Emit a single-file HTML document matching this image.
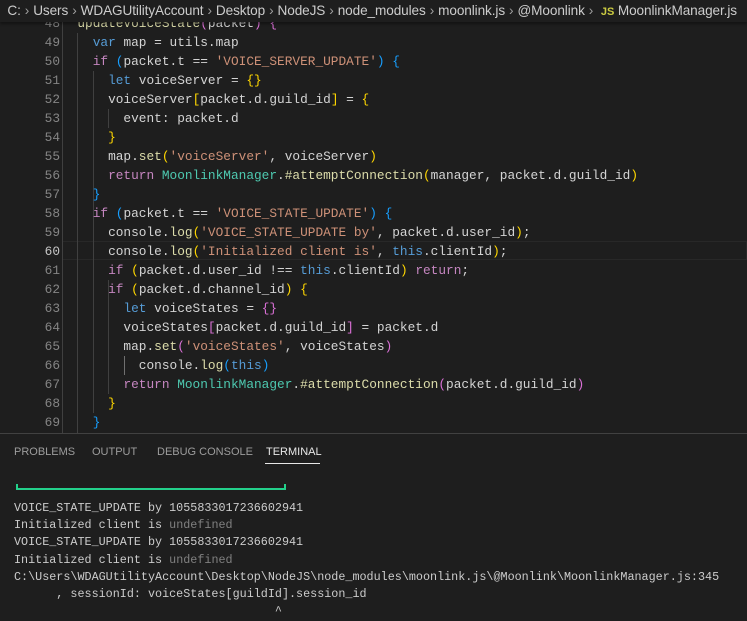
<!DOCTYPE html>
<html><head><meta charset="utf-8"><style>
body{margin:0;width:747px;height:620px;background:#1e1e1e;overflow:hidden;position:relative;font-family:"Liberation Mono",monospace}
.bc{position:absolute;left:0;top:0;width:747px;height:22px;background:#1e1e1e;font-family:"Liberation Sans",sans-serif;font-size:13.6px;letter-spacing:-0.1px;color:#cccccc;line-height:22px;white-space:nowrap;z-index:2;box-shadow:0 2px 3px #0006}
.bc .s{color:#a0a0a0;margin:0 4px}
.ln{position:absolute;left:0;width:62px;text-align:right;padding-right:0;color:#858585;font-size:12.8px}
.code{position:absolute;left:62px;font-size:12.8px;color:#d4d4d4;white-space:pre;line-height:19px}
.row{position:absolute;left:0;width:747px;height:19px;line-height:19px}
.k{color:#569cd6}.c{color:#c586c0}.s1{color:#ce9178}.f{color:#dcdcaa}.t{color:#4ec9b0}
.g{color:#ffd700}.p{color:#da70d6}.b{color:#179fff}
.guide{position:absolute;width:1px;background:#404040}
.panel{position:absolute;left:0;top:433px;width:747px;height:187px;border-top:1px solid #414141;background:#1e1e1e}
.tabs{position:absolute;top:12px;font-family:"Liberation Sans",sans-serif;font-size:11px;color:#9d9d9d}
.term{position:absolute;left:14px;font-size:11.75px;color:#cccccc;white-space:pre;line-height:17.2px}
</style></head><body>
<div class="bc">&nbsp;&nbsp;C:<span class="s">›</span>Users<span class="s">›</span>WDAGUtilityAccount<span class="s">›</span>Desktop<span class="s">›</span>NodeJS<span class="s">›</span>node_modules<span class="s">›</span>moonlink.js<span class="s">›</span>@Moonlink<span class="s">›</span> <span style="color:#cbcb41;font-weight:bold;font-size:11px">JS</span> MoonlinkManager.js</div>

<div class="row" style="top:241px;left:62px;width:685px;box-sizing:border-box;border:1px solid #282828"></div>
<div class="guide" style="left:62px;top:14px;height:419px"></div>
<div class="guide" style="left:77px;top:33px;height:400px"></div>
<div class="guide" style="left:93px;top:71px;height:95px"></div>
<div class="guide" style="left:108px;top:109px;height:19px"></div>
<div class="guide" style="left:93px;top:166px;height:247px"></div>
<div class="guide" style="left:108px;top:280px;height:114px"></div>
<div class="guide" style="left:124px;top:356px;height:19px;background:#707070"></div>

<div class="code" style="top:14px">  <span class="f">updateVoiceState</span><span class="p">(</span>packet<span class="p">)</span> <span class="p">{</span>
    <span class="k">var</span> map = utils.map
    <span class="c">if</span> <span class="b">(</span>packet.t == <span class="s1">'VOICE_SERVER_UPDATE'</span><span class="b">)</span> <span class="b">{</span>
      <span class="k">let</span> voiceServer = <span class="g">{}</span>
      voiceServer<span class="g">[</span>packet.d.guild_id<span class="g">]</span> = <span class="g">{</span>
        event: packet.d
      <span class="g">}</span>
      map.<span class="f">set</span><span class="g">(</span><span class="s1">'voiceServer'</span>, voiceServer<span class="g">)</span>
      <span class="c">return</span> <span class="t">MoonlinkManager</span>.<span class="f">#attemptConnection</span><span class="g">(</span>manager, packet.d.guild_id<span class="g">)</span>
    <span class="b">}</span>
    <span class="c">if</span> <span class="b">(</span>packet.t == <span class="s1">'VOICE_STATE_UPDATE'</span><span class="b">)</span> <span class="b">{</span>
      console.<span class="f">log</span><span class="g">(</span><span class="s1">'VOICE_STATE_UPDATE by'</span>, packet.d.user_id<span class="g">)</span>;
      console.<span class="f">log</span><span class="g">(</span><span class="s1">'Initialized client is'</span>, <span class="k">this</span>.clientId<span class="g">)</span>;
      <span class="c">if</span> <span class="g">(</span>packet.d.user_id !== <span class="k">this</span>.clientId<span class="g">)</span> <span class="c">return</span>;
      <span class="c">if</span> <span class="g">(</span>packet.d.channel_id<span class="g">)</span> <span class="g">{</span>
        <span class="k">let</span> voiceStates = <span class="p">{}</span>
        voiceStates<span class="p">[</span>packet.d.guild_id<span class="p">]</span> = packet.d
        map.<span class="f">set</span><span class="p">(</span><span class="s1">'voiceStates'</span>, voiceStates<span class="p">)</span>
          console.<span class="f">log</span><span class="b">(</span><span class="k">this</span><span class="b">)</span>
        <span class="c">return</span> <span class="t">MoonlinkManager</span>.<span class="f">#attemptConnection</span><span class="p">(</span>packet.d.guild_id<span class="p">)</span>
      <span class="g">}</span>
    <span class="b">}</span></div>
<div class="ln" style="top:14px;line-height:19px;width:60px">48<br>49<br>50<br>51<br>52<br>53<br>54<br>55<br>56<br>57<br>58<br>59<br><span style="color:#c6c6c6">60</span><br>61<br>62<br>63<br>64<br>65<br>66<br>67<br>68<br>69</div>

<div class="panel">
<div class="tabs" style="left:14px">PROBLEMS</div>
<div class="tabs" style="left:92px">OUTPUT</div>
<div class="tabs" style="left:157px">DEBUG CONSOLE</div>
<div class="tabs" style="left:266px;color:#e7e7e7">TERMINAL</div>
<div style="position:absolute;left:265px;top:29px;width:55px;height:1px;background:#e7e7e7"></div>
<div style="position:absolute;left:16px;top:50px;width:270px;height:6px;border:2px solid #23d18b;border-top:none;box-sizing:border-box"></div>
</div>
<div class="term" style="top:500px">VOICE_STATE_UPDATE by 1055833017236602941
Initialized client is <span style="color:#808080">undefined</span>
VOICE_STATE_UPDATE by 1055833017236602941
Initialized client is <span style="color:#808080">undefined</span>
C:\Users\WDAGUtilityAccount\Desktop\NodeJS\node_modules\moonlink.js\@Moonlink\MoonlinkManager.js:345
      , sessionId: voiceStates[guildId].session_id
                                     ^</div>
</body></html>
